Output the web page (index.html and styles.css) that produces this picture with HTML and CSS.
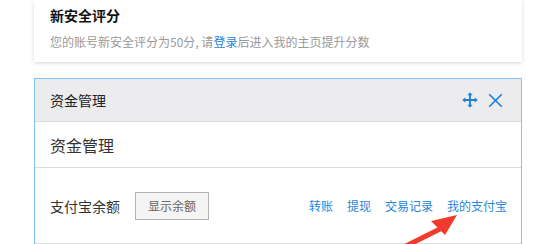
FILE: index.html
```html
<!DOCTYPE html>
<html>
<head>
<meta charset="utf-8">
<link rel="stylesheet" href="styles.css">
</head>
<body>
<div class="page">
  <div class="card score">
    <div class="score-title">新安全评分</div>
    <div class="score-text">您的账号新安全评分为<span class="num">50</span>分, 请<a class="link">登录</a>后进入我的主页提升分数</div>
  </div>
  <div class="card panel">
    <div class="panel-head">
      <span class="panel-title">资金管理</span>
      <span class="tools">
        <svg class="ico" width="18" height="18" viewBox="0 0 18 18">
          <path d="M9 1.2 L6.4 4.3 H8.1 V8.1 H4.3 V6.4 L1.2 9 L4.3 11.6 V9.9 H8.1 V13.7 H6.4 L9 16.8 L11.6 13.7 H9.9 V9.9 H13.7 V11.6 L16.8 9 L13.7 6.4 V8.1 H9.9 V4.3 H11.6 Z" fill="#1b7fd8"/>
        </svg>
        <svg class="ico" width="15" height="15" viewBox="0 0 15 15">
          <path d="M1.2 1.2 L13.8 13.8 M13.8 1.2 L1.2 13.8" stroke="#1b7fd8" stroke-width="1.6" fill="none"/>
        </svg>
      </span>
    </div>
    <div class="panel-sub">资金管理</div>
    <div class="panel-row">
      <span class="label">支付宝余额</span>
      <button class="btn">显示余额</button>
      <span class="links">
        <a class="link">转账</a>
        <a class="link">提现</a>
        <a class="link">交易记录</a>
        <a class="link">我的支付宝</a>
      </span>
    </div>
  </div>
  <svg class="arrow" width="80" height="45" viewBox="0 0 80 45">
    <path d="M6 46 L50 24" stroke="#f2392e" stroke-width="5" fill="none"/>
    <path d="M67 10 L41 16 L55 30 Z" fill="#f2392e"/>
  </svg>
</div>
</body>
</html>
```
FILE: styles.css
```css
* { box-sizing: border-box; }
body {
  margin: 0;
  background: #fff;
  font-family: "Noto Sans CJK SC", "Noto Sans", sans-serif;
  color: #333;
}
.page {
  position: relative;
  width: 538px;
  height: 244px;
  overflow: hidden;
  padding-left: 34px;
}
.card {
  width: 488px;
  background: #fff;
}
.score {
  padding: 6px 16px 11px;
  box-shadow: 0 1px 4px rgba(0,0,0,0.16);
}
.score-title {
  font-size: 14px;
  font-weight: bold;
  line-height: 18px;
  color: #111;
}
.score-text {
  margin-top: 9px;
  font-size: 12px;
  line-height: 18px;
  color: #999;
}
.num { color: #999; }
.link { color: #1f86db; text-decoration: none; }
.panel {
  margin-top: 16px;
  border: 1px solid #7fc3f2;
  border-bottom: none;
  height: 170px;
}
.panel-head {
  height: 43px;
  background: #ececee;
  border-bottom: 1px solid #dcdcdc;
  display: flex;
  align-items: center;
  justify-content: space-between;
  padding: 0 18px 0 15px;
}
.panel-title {
  font-size: 14px;
  color: #222;
}
.tools {
  display: flex;
  align-items: center;
  gap: 9px;
}
.ico { display: block; }
.panel-sub {
  height: 46px;
  border-bottom: 1px solid #dcdcdc;
  display: flex;
  align-items: center;
  padding-left: 15px;
  font-size: 16px;
  color: #333;
}
.panel-row {
  height: 76px;
  border-bottom: 1px solid #dcdcdc;
  display: flex;
  align-items: center;
  padding: 0 14px 0 15px;
}
.label {
  font-size: 14px;
  color: #333;
}
.btn {
  margin-left: 15px;
  width: 74px;
  height: 28px;
  border: 1px solid #b3b3b3;
  background: #f4f4f4;
  color: #666;
  font-family: inherit;
  font-size: 12px;
  padding: 0;
}
.links {
  margin-left: auto;
  display: flex;
  gap: 14px;
  font-size: 12px;
}
.arrow {
  position: absolute;
  left: 390px;
  top: 205px;
}
```
